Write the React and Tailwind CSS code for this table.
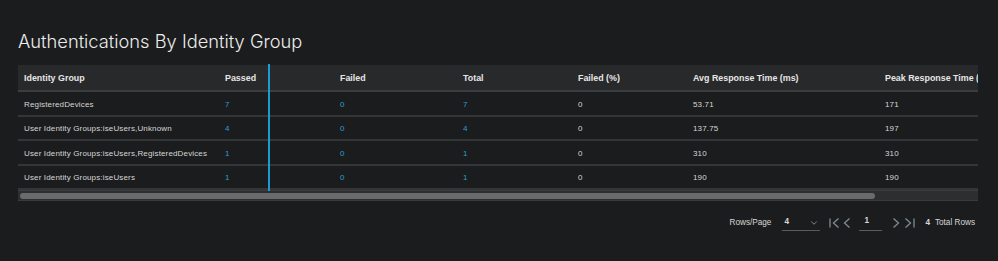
import React from 'react';
import { ChevronDown } from 'lucide-react';

const rows = [
    { group: 'RegisteredDevices', passed: 7, failed: 0, total: 7, pct: 0, avg: '53.71', peak: 171 },
    { group: 'User Identity Groups:iseUsers,Unknown', passed: 4, failed: 0, total: 4, pct: 0, avg: '137.75', peak: 197 },
    { group: 'User Identity Groups:iseUsers,RegisteredDevices', passed: 1, failed: 0, total: 1, pct: 0, avg: '310', peak: 310 },
    { group: 'User Identity Groups:iseUsers', passed: 1, failed: 0, total: 1, pct: 0, avg: '190', peak: 190 },
];

const cols = 'grid grid-cols-[201px_115px_123px_115px_115px_192px_200px]';

function Chev({ dir = 'left', bar = false }) {
    const left = dir === 'left';
    return (
        <svg width={bar ? 11 : 8} height="12" viewBox={bar ? '0 0 11 12' : '0 0 8 12'} className="text-[#7f8b95]">
            {bar && <path d={left ? 'M1 1.5 L1 10.5' : 'M10 1.5 L10 10.5'} fill="none" stroke="currentColor" strokeWidth="1.3" />}
            {left ? (
                <path d={bar ? 'M9.5 1.5 L4.5 6 L9.5 10.5' : 'M6.5 1.5 L1.5 6 L6.5 10.5'} fill="none" stroke="currentColor" strokeWidth="1.3" />
            ) : (
                <path d="M1.5 1.5 L6.5 6 L1.5 10.5" fill="none" stroke="currentColor" strokeWidth="1.3" />
            )}
        </svg>
    );
}

function App() {
    return (
        <div className="w-[998px] h-[261px] bg-[#1b1c1d] text-[#d8d8d8] overflow-hidden" style={{ fontFamily: '"Liberation Sans", Arial, sans-serif' }}>
            <h1 className="pl-[18px] pt-[30px] text-[18.3px] leading-[23px] text-[#ececec]" style={{ fontFamily: 'Inter, sans-serif', fontWeight: 300 }}>
                Authentications By Identity Group
            </h1>

            <div className="relative ml-[18px] mt-[12px] w-[960px]">
                <div className="overflow-hidden">
                    <div className="w-[1100px]">
                        {/* Header */}
                        <div className={`${cols} h-[27px] items-center pt-[3px] bg-[#28292b] border-b-2 border-[#3c3d3f] text-[8.9px] font-bold text-[#e6e6e6] whitespace-nowrap`}>
                            <div className="pl-[6px]">Identity Group</div>
                            <div className="pl-[6px]">Passed</div>
                            <div className="pl-[6px]">Failed</div>
                            <div className="pl-[6px]">Total</div>
                            <div className="pl-[6px]">Failed (%)</div>
                            <div className="pl-[6px]">Avg Response Time (ms)</div>
                            <div className="pl-[6px]">Peak Response Time (ms)</div>
                        </div>

                        {rows.map((r, i) => (
                            <div key={i} className={`${cols} h-[24.5px] items-center pt-[3px] border-b-2 border-[#343537] text-[8px] tracking-[0.15px] text-[#d6d6d6] whitespace-nowrap`}>
                                <div className="pl-[6px]">{r.group}</div>
                                <div className="pl-[6px] text-[#2b9fd4]">{r.passed}</div>
                                <div className="pl-[6px] text-[#2b9fd4]">{r.failed}</div>
                                <div className="pl-[6px] text-[#2b9fd4]">{r.total}</div>
                                <div className="pl-[6px]">{r.pct}</div>
                                <div className="pl-[6px]">{r.avg}</div>
                                <div className="pl-[6px]">{r.peak}</div>
                            </div>
                        ))}
                    </div>
                </div>

                {/* Scrollbar */}
                <div className="h-[11px] bg-[#2d2e30] border-y border-[#3a3b3d] flex items-center px-[2px]">
                    <div className="h-[6px] w-[855px] rounded-full bg-[#6a6b6c]" />
                </div>

                {/* Column resize line */}
                <div className="absolute left-[250px] top-[-1px] w-[2px] h-[127px] bg-[#1b9bd1]" />
            </div>

            {/* Pagination */}
            <div className="flex items-center justify-end pr-[23px] mt-[14px] text-[8.2px] text-[#d8d8d8] whitespace-nowrap">
                <span className="mr-[11px]">Rows/Page</span>
                <div className="flex items-center justify-between w-[38px] h-[16px] border-b border-[#5a5b5d] pl-[2px] mr-[9px]">
                    <span className="font-bold">4</span>
                    <ChevronDown size={10} strokeWidth={2} className="text-[#9a9a9a] mr-[1px]" />
                </div>
                <span className="mr-[3px]"><Chev dir="left" bar /></span>
                <span className="mr-[8px]"><Chev dir="left" /></span>
                <div className="w-[23px] h-[16px] border-b border-[#5a5b5d] pl-[5px] mr-[10px] font-bold">1</div>
                <span className="mr-[4px]"><Chev dir="right" /></span>
                <span className="mr-[10px]"><Chev dir="right" bar /></span>
                <span className="font-bold mr-[5px]">4</span>
                <span>Total Rows</span>
            </div>
        </div>
    );
}

export default App;
